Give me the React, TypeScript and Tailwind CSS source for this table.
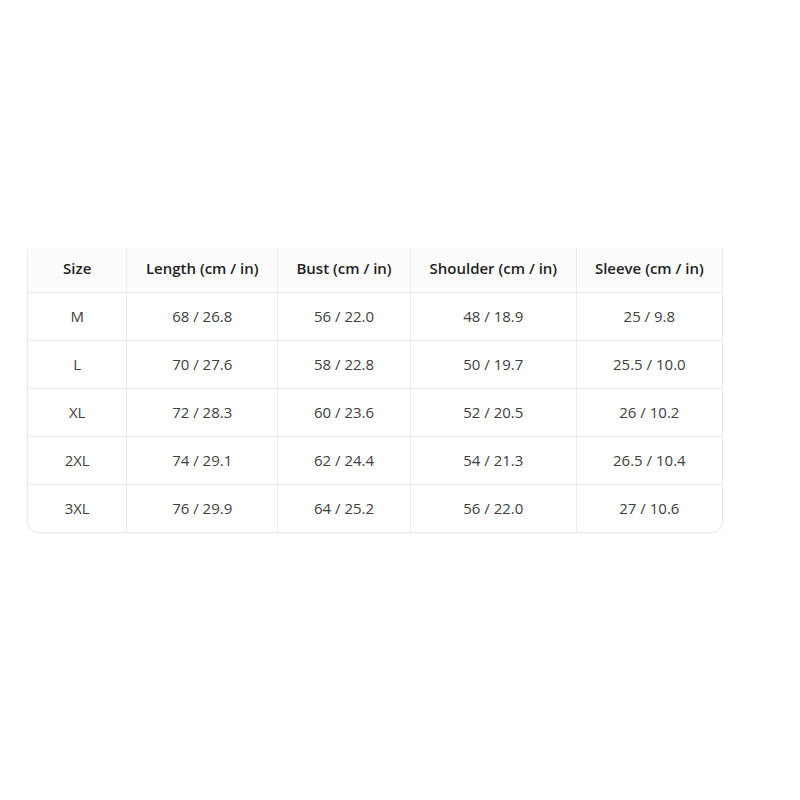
import React from "react";

const headers = ["Size", "Length (cm / in)", "Bust (cm / in)", "Shoulder (cm / in)", "Sleeve (cm / in)"];

const rows = [
  ["M", "68 / 26.8", "56 / 22.0", "48 / 18.9", "25 / 9.8"],
  ["L", "70 / 27.6", "58 / 22.8", "50 / 19.7", "25.5 / 10.0"],
  ["XL", "72 / 28.3", "60 / 23.6", "52 / 20.5", "26 / 10.2"],
  ["2XL", "74 / 29.1", "62 / 24.4", "54 / 21.3", "26.5 / 10.4"],
  ["3XL", "76 / 29.9", "64 / 25.2", "56 / 22.0", "27 / 10.6"],
];

// column widths measured from the screenshot
const cols = ["w-[99px]", "w-[151px]", "w-[133px]", "w-[166px]", "w-[146px]"];

export default function App() {
  return (
    <div className="min-h-[800px] bg-white pt-[248px] pl-[27px] font-['Open_Sans',sans-serif]">
      <div className="w-[696px] overflow-hidden rounded-b-xl border border-t-0 border-[#ececec] shadow-[0_1px_3px_rgba(0,0,0,0.04)]">
        <table className="w-full border-collapse text-[15px]">
          <thead>
            <tr className="h-[44px] bg-[#fcfcfc]">
              {headers.map((h, i) => (
                <th
                  key={h}
                  className={`${cols[i]} border-b border-[#ececec] pb-[3px] font-semibold text-[#1f1f1f] ${
                    i < 4 ? "border-r" : ""
                  }`}
                >
                  {h}
                </th>
              ))}
            </tr>
          </thead>
          <tbody>
            {rows.map((r, ri) => (
              <tr key={r[0]} className="h-[48px]">
                {r.map((c, i) => (
                  <td
                    key={i}
                    className={`text-center text-[#404040] border-[#ececec] ${i < 4 ? "border-r" : ""} ${
                      ri < rows.length - 1 ? "border-b" : ""
                    }`}
                  >
                    {c}
                  </td>
                ))}
              </tr>
            ))}
          </tbody>
        </table>
      </div>
    </div>
  );
}
